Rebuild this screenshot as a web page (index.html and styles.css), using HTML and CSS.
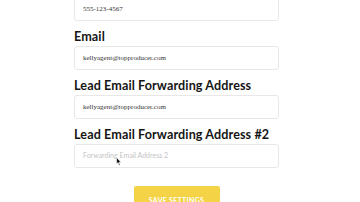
FILE: index.html
```html
<!DOCTYPE html>
<html lang="en">
  <head>
    <meta charset="UTF-8" />
    <meta name="viewport" content="width=device-width, initial-scale=1.0" />
    <title>Settings</title>
    <link rel="stylesheet" href="styles.css">
  </head>
  <body>
    <form class="settings">
      <div class="field">
        <input class="input" type="text" value="555-123-4567" />
      </div>

      <div class="field">
        <label class="label">Email</label>
        <input class="input" type="text" value="kellyagent@topproducer.com" />
      </div>

      <div class="field">
        <label class="label">Lead Email Forwarding Address</label>
        <input class="input" type="text" value="kellyagent@topproducer.com" />
      </div>

      <div class="field field-cursor">
        <label class="label">Lead Email Forwarding Address #2</label>
        <input class="input" type="text" placeholder="Forwarding Email Address 2" />
        <!-- mouse pointer caught in the capture -->
        <svg class="cursor" width="6" height="9" viewBox="0 0 6 9">
          <path d="M0.5 0.5 L0.5 7 L2 5.6 L3.2 8.3 L4.2 7.9 L3 5.2 L5 5.2 Z" fill="#111" stroke="#fff" stroke-width="0.6" />
        </svg>
      </div>

      <div class="actions">
        <button class="button" type="button">Save Settings</button>
      </div>
    </form>
  </body>
</html>
```

FILE: styles.css
```css
body {
  margin: 0;
  background-color: #fff;
  font-family: "Lato", Arial, sans-serif;
  color: #111;
}

.settings {
  width: 205px;
  margin: -3px 0 0 74px;
  display: flex;
  flex-direction: column;
}

.field {
  display: flex;
  flex-direction: column;
}

.field-cursor {
  position: relative;
}

.label {
  margin: 8px 0 1px;
  font-family: "Lato", Arial, sans-serif;
  font-weight: 700;
  font-size: 12.6px;
  line-height: 16px;
  letter-spacing: 0.1px;
  white-space: nowrap;
  color: #151515;
}

.input {
  box-sizing: border-box;
  width: 100%;
  height: 24px;
  margin: 0;
  padding: 0 8px;
  border: 1px solid #e8e8e8;
  border-radius: 3px;
  background: #fff;
  font-family: "Liberation Serif", "Times New Roman", serif;
  font-size: 7px;
  color: #333;
  outline: none;
}

.input::placeholder {
  font-family: "Lato", Arial, sans-serif;
  font-size: 7px;
  color: #c4c4c4;
}

.cursor {
  position: absolute;
  left: 42px;
  top: 38px;
}

.actions {
  display: flex;
  justify-content: center;
  margin-top: 18px;
}

.button {
  width: 86px;
  height: 30px;
  padding: 0 0 3px;
  border: none;
  border-radius: 2px;
  background-color: #f4d446;
  color: #fff;
  font-family: "Lato", Arial, sans-serif;
  font-weight: 700;
  font-size: 7px;
  letter-spacing: 0.3px;
  text-transform: uppercase;
  cursor: pointer;
}
```
